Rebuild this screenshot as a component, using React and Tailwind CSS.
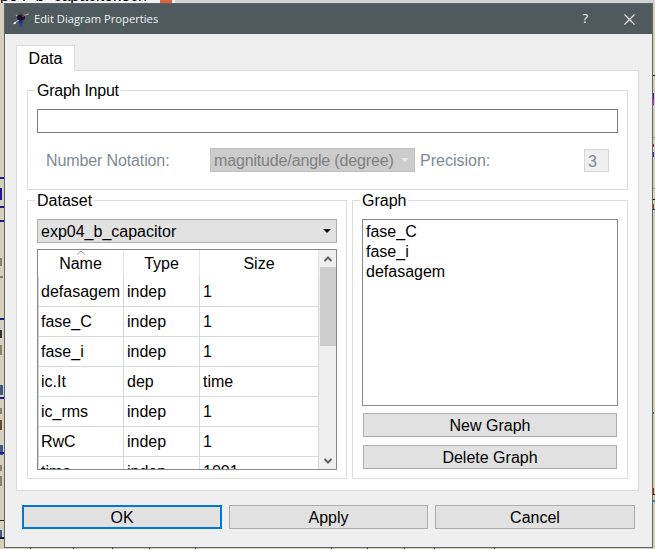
import * as React from "react"

const rows = [
  ["defasagem", "indep", "1"],
  ["fase_C", "indep", "1"],
  ["fase_i", "indep", "1"],
  ["ic.It", "dep", "time"],
  ["ic_rms", "indep", "1"],
  ["RwC", "indep", "1"],
  ["time", "indep", "1001"],
]

// bits of the schematic window that peek out around the dialog
const leftBits = [
  ["top-[177px] h-[2px] w-[4px] bg-[#1c1c8c]"],
  ["top-[188px] h-[12px] w-[2px] bg-[#1c1c8c]"],
  ["top-[206px] h-[2px] w-[4px] bg-[#1c1c8c]"],
  ["top-[220px] h-[2px] w-[4px] bg-[#1c1c8c]"],
  ["top-[258px] h-[8px] w-[2px] bg-[#8a8468]"],
  ["top-[276px] h-[2px] w-[3px] bg-[#8a8468]"],
  ["top-[318px] h-[2px] w-[4px] bg-[#1c1c8c]"],
  ["top-[330px] h-[8px] w-[2px] bg-[#333333]"],
  ["top-[345px] h-[10px] w-[2px] bg-[#8a8468]"],
  ["top-[385px] h-[10px] w-[3px] bg-[#3a5a8a]"],
  ["top-[397px] h-[2px] w-[4px] bg-[#1c1c8c]"],
  ["top-[408px] h-[6px] w-[2px] bg-[#8a8468]"],
  ["top-[420px] h-[10px] w-[2px] bg-[#6a4a2a]"],
  ["top-[445px] h-[10px] w-[3px] bg-[#3a5a8a]"],
  ["top-[452px] h-[2px] w-[4px] bg-[#1c1c8c]"],
  ["top-[465px] h-[6px] w-[2px] bg-[#8a8468]"],
  ["top-[476px] h-[10px] w-[2px] bg-[#8a8468]"],
  ["top-[520px] h-[1px] w-[4px] bg-[#222222]"],
  ["top-[530px] h-[8px] w-[2px] bg-[#3a5a8a]"],
  ["top-[537px] h-[2px] w-[4px] bg-[#111111]"],
]

const rightBits = [
  ["top-[75px] h-[1px] w-[3px] bg-[#111111]"],
  ["top-[93px] h-[6px] w-[2px] bg-[#2222cc]"],
  ["top-[99px] h-[6px] w-[2px] bg-[#cc22cc]"],
  ["top-[137px] h-[1px] w-[3px] bg-[#999999]"],
  ["top-[144px] h-[3px] w-[2px] bg-[#cc2222]"],
  ["top-[152px] h-[5px] w-[2px] bg-[#2222cc]"],
  ["top-[188px] h-[1px] w-[3px] bg-[#999999]"],
  ["top-[199px] h-[1px] w-[3px] bg-[#111111]"],
  ["top-[204px] h-[6px] w-[2px] bg-[#a04a1a]"],
  ["top-[209px] h-[1px] w-[3px] bg-[#1c1c8c]"],
  ["top-[412px] h-[2px] w-[2px] bg-[#3a7aa8]"],
  ["top-[488px] h-[6px] w-[2px] bg-[#8a2a1a]"],
  ["top-[494px] h-[1px] w-[3px] bg-[#111111]"],
  ["top-[500px] h-[2px] w-[3px] bg-[#3a7aa8]"],
]

const bottomTicks = [30, 73, 112, 149, 195, 331, 367, 404, 434, 494]

function Button({ className, children }) {
  return (
    <button className={"h-[24px] border border-[#adadad] bg-[#e1e1e1] text-center leading-[21px] " + className}>
      {children}
    </button>
  )
}

function Group({ title, className, legendClass = "", children }) {
  return (
    <fieldset className={"min-w-0 border border-[#dcdcdc] px-[9px] " + className}>
      <legend className={"ml-[-2px] h-[18px] px-[2px] leading-[20px] " + legendClass}>{title}</legend>
      {children}
    </fieldset>
  )
}

function Chevron({ up }) {
  return (
    <svg width="10" height="6" viewBox="0 0 10 6" className="block">
      <path d={up ? "M1.5 5 L5 1.5 L8.5 5" : "M1.5 1 L5 4.5 L8.5 1"} fill="none" stroke="#606060" strokeWidth="2" />
    </svg>
  )
}

function SpiderIcon() {
  return (
    <svg width="18" height="18" viewBox="0 0 18 18" className="block">
      <path d="M1 14 L8 9 M9 6 L17 4 M8 8 L4 5" stroke="#a8adb0" strokeWidth="1.2" fill="none" />
      <ellipse cx="9" cy="7.5" rx="4" ry="3" fill="#1b1030" />
      <rect x="7" y="10" width="3.5" height="3.5" fill="#232a78" />
      <rect x="7.5" y="13" width="2.5" height="3.5" fill="#2b3f9c" />
      <rect x="10" y="5" width="2" height="2" fill="#b02040" />
      <rect x="2" y="12" width="2" height="2" fill="#d8dadb" />
    </svg>
  )
}

function DataTable() {
  return (
    <div className="relative mt-[6px] flex h-[221px] w-[300px] overflow-hidden border border-[#868a90]">
      <div className="w-[281px] shrink-0 bg-white">
        <div className="relative grid h-[27px] grid-cols-[86px_76px_119px] bg-white text-center leading-[27px]">
          <svg width="10" height="5" viewBox="0 0 10 5" className="absolute left-[38px] top-0">
            <path d="M1 4.5 L5 1 L9 4.5" fill="none" stroke="#9a9a9a" strokeWidth="1" />
          </svg>
          <div className="border-r border-[#e4e4e4]">Name</div>
          <div className="border-r border-[#e4e4e4]">Type</div>
          <div className="border-r border-[#e4e4e4]">Size</div>
        </div>
        {rows.map((r) => (
          <div key={r[0]} className="grid h-[30px] grid-cols-[86px_76px_119px] grid-rows-[29px] border-b border-[#d8d8d8] leading-[30px]">
            <div className="border-x border-[#d8d8d8] pl-[2px]">{r[0]}</div>
            <div className="border-r border-[#d8d8d8] pl-[3px]">{r[1]}</div>
            <div className="border-r border-[#d8d8d8] pl-[3px]">{r[2]}</div>
          </div>
        ))}
      </div>
      <div className="flex flex-1 flex-col items-center bg-[#efefef]">
        <div className="flex h-[17px] items-center"><Chevron up /></div>
        <div className="h-[79px] w-[16px] bg-[#cdcdcd]" />
        <div className="flex-1" />
        <div className="flex h-[17px] items-center"><Chevron /></div>
      </div>
    </div>
  )
}

export default function App() {
  return (
    <div className="relative h-[549px] w-[655px] overflow-hidden bg-[#d6cfbb] font-['Liberation_Sans',Arial,sans-serif] text-[16px] text-black">
      {/* schematic behind the dialog */}
      <div className="absolute left-0 top-0 h-[3px] w-full overflow-hidden bg-[#d2d2d2]">
        <span className="absolute left-0 top-0 h-[3px] w-[175px] bg-[#f0f0f0]" />
        <span className="absolute left-0 top-[-13px] whitespace-nowrap text-[16px] leading-[18px]">p04_b_capacitor.sch</span>
        <span className="absolute left-[160px] top-0 h-[3px] w-[12px] bg-[#d8663a]" />
      </div>
      {leftBits.map(([c]) => <span key={c} className={"absolute left-0 " + c} />)}
      {rightBits.map(([c]) => <span key={c} className={"absolute left-[652px] " + c} />)}
      {bottomTicks.map((x) => (
        <span key={x} className="absolute top-[547px] h-[2px] w-[1px] bg-[#111111]" style={{ left: x }} />
      ))}

      {/* dialog window */}
      <div className="absolute left-[4px] top-[3px] flex h-[545px] w-[649px] flex-col border border-[#5b666b] bg-[#efefef]">
        <div className="flex h-[30px] shrink-0 items-center bg-[#4f5a5f] text-[#f0f2f2]">
          <div className="ml-[7px]"><SpiderIcon /></div>
          <span className="ml-[4px] font-['Open_Sans',sans-serif] text-[11.2px] leading-[18px]">Edit Diagram Properties</span>
          <span className="ml-auto mr-[36px] font-['Open_Sans',sans-serif] text-[13px]">?</span>
          <svg width="11" height="11" viewBox="0 0 11 11" className="mr-[17px]">
            <path d="M0.5 0.5 L10.5 10.5 M10.5 0.5 L0.5 10.5" stroke="#f4f5f5" strokeWidth="1.1" />
          </svg>
        </div>

        <div className="flex flex-1 flex-col pl-[11px] pr-[13px] pt-[11px]">
          {/* tab */}
          <div className="relative z-10 mb-[-1px] flex h-[26px] w-[59px] items-center justify-center border border-b-0 border-[#d9d9d9] bg-white leading-[22px]">
            Data
          </div>

          {/* pane */}
          <div className="flex h-[421px] flex-col border border-[#d9d9d9] bg-white px-[10px] pt-[10px]">
            <Group title="Graph Input" className="h-[109px]" legendClass="tracking-[-0.25px]">
              <div className="mt-[10px] h-[24px] border border-[#7a7a7a] bg-white" />
              <div className="mt-[15px] flex h-[24px] items-center text-[#808a94]">
                <span className="ml-[9px] w-[164px] pt-[2px] tracking-[-0.12px]">Number Notation:</span>
                <div className="flex h-[24px] w-[205px] items-center justify-between border border-[#c0c0c0] bg-[#cccccc] pl-[3px] pr-[5px] text-[#7f7f7f]">
                  <span className="pt-[2px] tracking-[-0.15px]">magnitude/angle (degree)</span>
                  <svg width="8" height="4" viewBox="0 0 8 4"><path d="M0 0 H8 L4 4 Z" fill="#e8e8e8" /></svg>
                </div>
                <span className="ml-[5px] w-[164px] pt-[2px]">Precision:</span>
                <div className="h-[23px] w-[25px] border border-[#d4d4d4] bg-[#efefef] pl-[3px] leading-[23px] text-[#808a94]">3</div>
              </div>
            </Group>

            <div className="mt-[1px] flex gap-[5px]">
              <Group title="Dataset" className="h-[288px] w-[320px]">
                <div className="mt-[10px] flex h-[24px] w-[300px] items-center justify-between border border-[#adadad] bg-[#e1e1e1] pl-[3px] pr-[5px]">
                  <span className="pt-[2px]">exp04_b_capacitor</span>
                  <svg width="8" height="4" viewBox="0 0 8 4"><path d="M0 0 H8 L4 4 Z" fill="#111111" /></svg>
                </div>
                <DataTable />
              </Group>

              <Group title="Graph" className="h-[288px] flex-1">
                <div className="mt-[10px] h-[187px] w-[256px] border border-[#868a90] bg-white pl-[3px] pt-[2px] leading-[20px]">
                  <div>fase_C</div>
                  <div>fase_i</div>
                  <div>defasagem</div>
                </div>
                <Button className="ml-[1px] mt-[7px] block w-[254px]">New Graph</Button>
                <Button className="ml-[1px] mt-[8px] block w-[254px]">Delete Graph</Button>
              </Group>
            </div>
          </div>

          {/* dialog buttons */}
          <div className="ml-[6px] mt-[14px] flex gap-[7px]">
            <button className="h-[24px] w-[200px] border-2 border-[#0078d7] bg-[#e1e1e1] leading-[19px]">OK</button>
            <Button className="w-[199px]">Apply</Button>
            <Button className="w-[200px]">Cancel</Button>
          </div>
        </div>
      </div>
    </div>
  )
}
